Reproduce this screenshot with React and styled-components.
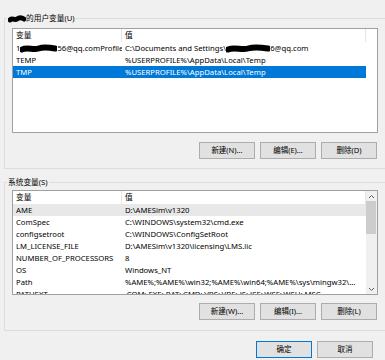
import React from "react";
import styled, { createGlobalStyle } from "styled-components";

const FONT = `"Noto Sans", "Noto Sans CJK SC", sans-serif`;

const GlobalStyle = createGlobalStyle`
  html, body { margin: 0; padding: 0; background: #f0f0f0; overflow: hidden; }
  body { font-family: ${FONT}; font-size: 7.7px; color: #000; }
`;

const Page = styled.div`
  width: 400px;
  height: 360px;
  padding: 11px 0 0 4px;
  box-sizing: border-box;
`;

const Group = styled.fieldset`
  margin: ${(p) => p.$mt}px 0 0 0;
  padding: ${(p) => p.$pt}px 0 ${(p) => p.$pb}px 7px;
  border: 1px solid #dcdcdc;
  width: 400px;
  box-sizing: border-box;
  min-width: 0;
`;

const Legend = styled.legend`
  height: 14px;
  line-height: 14px;
  padding: 0 1px;
  margin-left: -5px;
  white-space: nowrap;
`;

const ListView = styled.div`
  width: 366px;
  height: 105px;
  box-sizing: border-box;
  border: 1px solid #a0a0a0;
  background: #fff;
  display: flex;
  overflow: hidden;
`;

const ListBody = styled.div`
  flex: 1;
  display: flex;
  flex-direction: column;
  min-width: 0;
`;

const HeaderRow = styled.div`
  display: flex;
  height: 13px;
  flex-shrink: 0;
`;

const HeaderCell = styled.div`
  width: ${(p) => p.$w}px;
  box-sizing: border-box;
  padding-left: 3px;
  line-height: 13px;
  border-right: 1px solid #e5e5e5;
`;

const Row = styled.div`
  display: flex;
  width: 353px;
  height: 12px;
  flex-shrink: 0;
  line-height: 12px;
  white-space: nowrap;
  background: ${(p) => (p.$sel ? "#0078d7" : p.$hot ? "#e8e8e8" : "transparent")};
  color: ${(p) => (p.$sel ? "#fff" : "#000")};
`;

const Cell = styled.div`
  width: ${(p) => p.$w}px;
  box-sizing: border-box;
  padding-left: 3px;
  overflow: hidden;
  flex-shrink: 0;
`;

const ScrollBar = styled.div`
  width: 11px;
  display: flex;
  flex-direction: column;
  background: #f0f0f0;
`;

const ScrollArrow = styled.div`
  height: 10px;
  display: flex;
  align-items: center;
  justify-content: center;
  flex-shrink: 0;
  padding-right: 1px;
`;

const ScrollThumb = styled.div`
  height: 33px;
  margin-right: 1px;
  background: #cdcdcd;
  flex-shrink: 0;
`;

const ScrollTrack = styled.div`
  flex: 1;
`;

const ButtonRow = styled.div`
  display: flex;
  justify-content: flex-end;
  gap: 5px;
  width: 365px;
  margin-top: ${(p) => p.$mt}px;
`;

const BottomBar = styled.div`
  display: flex;
  justify-content: flex-end;
  gap: 5px;
  width: 381px;
  padding-right: 12px;
  box-sizing: border-box;
  margin-top: 10px;
`;

const Button = styled.button`
  width: 56px;
  height: 17px;
  box-sizing: border-box;
  padding: 0;
  margin: 0;
  border: 1px solid ${(p) => (p.$primary ? "#0078d7" : "#adadad")};
  background: #e1e1e1;
  font-family: ${FONT};
  font-size: 7.5px;
  color: #000;
  line-height: 15px;
`;

const Blob = ({ w, h = 9 }) => (
  <svg width={w} height={h} viewBox={`0 0 ${w} ${h}`} style={{ verticalAlign: "middle" }}>
    <path
      d={`M2 ${h / 2 + 1} C ${w * 0.2} ${h / 2 - 2}, ${w * 0.35} ${h / 2 + 2}, ${w * 0.5} ${h / 2} S ${w * 0.8} ${h / 2 - 1}, ${w - 2} ${h / 2}`}
      stroke="#000"
      strokeWidth={h - 3}
      strokeLinecap="round"
      fill="none"
    />
  </svg>
);

const Arrow = ({ up }) => (
  <svg width="7" height="5" viewBox="0 0 7 5">
    <polyline
      points={up ? "1,4 3.5,1.5 6,4" : "1,1 3.5,3.5 6,1"}
      stroke="#606060"
      strokeWidth="1"
      fill="none"
    />
  </svg>
);

const C1 = 109;
const C2 = 244;

const userVars = [
  {
    name: (
      <>
        1<Blob w={37} />56@qq.comProfile
      </>
    ),
    value: (
      <>
        C:\Documents and Settings\<Blob w={44} />6@qq.com
      </>
    ),
  },
  { name: "TEMP", value: "%USERPROFILE%\\AppData\\Local\\Temp" },
  { name: "TMP", value: "%USERPROFILE%\\AppData\\Local\\Temp", sel: true },
];

const sysVars = [
  { name: "AME", value: "D:\\AMESim\\v1320", hot: true },
  { name: "ComSpec", value: "C:\\WINDOWS\\system32\\cmd.exe" },
  { name: "configsetroot", value: "C:\\WINDOWS\\ConfigSetRoot" },
  { name: "LM_LICENSE_FILE", value: "D:\\AMESim\\v1320\\licensing\\LMS.lic" },
  { name: "NUMBER_OF_PROCESSORS", value: "8" },
  { name: "OS", value: "Windows_NT" },
  { name: "Path", value: "%AME%;%AME%\\win32;%AME%\\win64;%AME%\\sys\\mingw32\\..." },
  { name: "PATHEXT", value: ".COM;.EXE;.BAT;.CMD;.VBS;.VBE;.JS;.JSE;.WSF;.WSH;.MSC" },
];

const VarList = ({ rows, scroll }) => (
  <ListView>
    <ListBody>
      <HeaderRow>
        <HeaderCell $w={C1}>变量</HeaderCell>
        <HeaderCell $w={C2}>值</HeaderCell>
      </HeaderRow>
      {rows.map((r, i) => (
        <Row key={i} $sel={r.sel} $hot={r.hot}>
          <Cell $w={C1}>{r.name}</Cell>
          <Cell $w={C2}>{r.value}</Cell>
        </Row>
      ))}
    </ListBody>
    {scroll && (
      <ScrollBar>
        <ScrollArrow>
          <Arrow up />
        </ScrollArrow>
        <ScrollThumb />
        <ScrollTrack />
        <ScrollArrow>
          <Arrow />
        </ScrollArrow>
      </ScrollBar>
    )}
  </ListView>
);

export default function App() {
  return (
    <Page>
      <GlobalStyle />
      <Group $mt={0} $pt={3} $pb={9}>
        <Legend>
          <Blob w={18} h={8} />的用户变量(U)
        </Legend>
        <VarList rows={userVars} />
        <ButtonRow $mt={9}>
          <Button>新建(N)...</Button>
          <Button>编辑(E)...</Button>
          <Button>删除(D)</Button>
        </ButtonRow>
      </Group>
      <Group $mt={6} $pt={1} $pb={10}>
        <Legend>系统变量(S)</Legend>
        <VarList rows={sysVars} scroll />
        <ButtonRow $mt={8}>
          <Button>新建(W)...</Button>
          <Button>编辑(I)...</Button>
          <Button>删除(L)</Button>
        </ButtonRow>
      </Group>
      <BottomBar>
        <Button $primary>确定</Button>
        <Button>取消</Button>
      </BottomBar>
    </Page>
  );
}
